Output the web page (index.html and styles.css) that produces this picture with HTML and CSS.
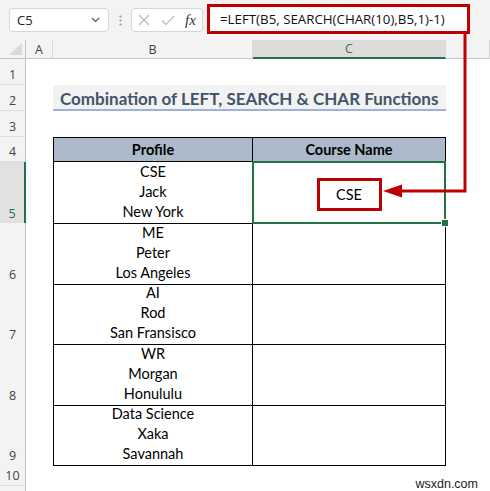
FILE: index.html
```html
<!DOCTYPE html>
<html lang="en">
<head>
    <meta charset="UTF-8">
    <title>LEFT SEARCH CHAR</title>
    <link rel="stylesheet" href="styles.css">
</head>
<body>
    <div class="app">
        <div class="fbar">
            <div class="namebox">
                <span>C5</span>
                <svg width="9" height="6" viewBox="0 0 9 6"><path d="M1 1 L4.5 4.5 L8 1" stroke="#555" stroke-width="1.2" fill="none"/></svg>
            </div>
            <div class="grip">
                <svg width="3" height="11" viewBox="0 0 3 11"><circle cx="1.5" cy="1.5" r="1.1" fill="#999"/><circle cx="1.5" cy="5.5" r="1.1" fill="#999"/><circle cx="1.5" cy="9.5" r="1.1" fill="#999"/></svg>
            </div>
            <div class="fxbox">
                <svg width="12" height="12" viewBox="0 0 12 12"><path d="M1 1 L11 11 M11 1 L1 11" stroke="#bbb" stroke-width="1.2"/></svg>
                <svg width="14" height="11" viewBox="0 0 14 11"><path d="M1 5.5 L5 9.5 L13 1" stroke="#bbb" stroke-width="1.2" fill="none"/></svg>
                <span class="fx">fx</span>
            </div>
            <div class="formula">=LEFT(B5, SEARCH(CHAR(10),B5,1)-1)</div>
        </div>

        <div class="sheet">
            <div class="row colhead">
                <div class="corner">
                    <svg width="13" height="12" viewBox="0 0 13 12"><polygon points="13,0 13,12 0,12" fill="#dadada"/></svg>
                </div>
                <div class="ch">A</div>
                <div class="ch">B</div>
                <div class="ch on">C</div>
                <div class="ch"></div>
            </div>

            <div class="row h26">
                <div class="rh">1</div><div></div><div></div><div></div><div></div>
            </div>
            <div class="row h26">
                <div class="rh">2</div><div></div>
                <div class="title">Combination of LEFT, SEARCH &amp; CHAR Functions</div>
                <div></div>
            </div>
            <div class="row h26">
                <div class="rh">3</div><div></div><div></div><div></div><div></div>
            </div>
            <div class="row h25">
                <div class="rh">4</div><div></div>
                <div class="tb head first">Profile</div>
                <div class="tb head">Course Name</div>
                <div></div>
            </div>
            <div class="row h61">
                <div class="rh on">5</div><div></div>
                <div class="tb first lines"><span>CSE</span><span>Jack</span><span>New York</span></div>
                <div class="tb sel"><span class="mark">CSE</span></div>
                <div></div>
            </div>
            <div class="row h60">
                <div class="rh">6</div><div></div>
                <div class="tb first lines"><span>ME</span><span>Peter</span><span>Los Angeles</span></div>
                <div class="tb"></div>
                <div></div>
            </div>
            <div class="row h61">
                <div class="rh">7</div><div></div>
                <div class="tb first lines"><span>AI</span><span>Rod</span><span>San Fransisco</span></div>
                <div class="tb"></div>
                <div></div>
            </div>
            <div class="row h60">
                <div class="rh">8</div><div></div>
                <div class="tb first lines"><span>WR</span><span>Morgan</span><span>Honululu</span></div>
                <div class="tb"></div>
                <div></div>
            </div>
            <div class="row h60">
                <div class="rh">9</div><div></div>
                <div class="tb first lines"><span>Data Science</span><span>Xaka</span><span>Savannah</span></div>
                <div class="tb"></div>
                <div></div>
            </div>
            <div class="row h22">
                <div class="rh">10</div><div></div><div></div><div></div><div></div>
            </div>
            <div class="row h22">
                <div class="rh"></div><div></div><div></div><div></div><div></div>
            </div>
        </div>

        <!-- annotation arrow from formula bar to the result -->
        <svg class="arrow" width="490" height="491" viewBox="0 0 490 491">
            <path d="M465 34 V191 H400" stroke="#c00000" stroke-width="3" fill="none"/>
            <polygon points="383,191 402,184.5 402,197.5" fill="#c00000"/>
        </svg>

        <div class="watermark">wsxdn.com</div>
    </div>
</body>
</html>
```

FILE: styles.css
```css
* {
    margin: 0;
    padding: 0;
    box-sizing: border-box;
}

body {
    background: #fff;
    font-family: Lato, "Open Sans", sans-serif;
    color: #000;
}

.app {
    position: relative;
    width: 490px;
    height: 491px;
    overflow: hidden;
}

/* formula bar */
.fbar {
    display: flex;
    height: 40px;
    padding-left: 9px;
    background: #f3f3f3;
}

.namebox {
    display: flex;
    align-items: center;
    justify-content: space-between;
    width: 100px;
    height: 24px;
    margin-top: 8px;
    padding: 0 8px 0 7px;
    background: #fff;
    border: 1px solid #d6d6d6;
    border-radius: 4px;
    font: 13px "Open Sans", sans-serif;
    color: #222;
}

.grip {
    display: flex;
    align-items: center;
    justify-content: center;
    width: 22px;
    height: 40px;
}

.fxbox {
    display: flex;
    align-items: center;
    gap: 11px;
    width: 72px;
    height: 24px;
    margin-top: 8px;
    padding-left: 6px;
    background: #fff;
    border: 1px solid #d6d6d6;
    border-radius: 4px;
}

.fx {
    font: italic 15px "Liberation Serif", serif;
    color: #333;
    margin-left: -1px;
}

.formula {
    width: 263px;
    height: 30px;
    margin-top: 4px;
    margin-left: 4px;
    padding-left: 10px;
    background: #fff;
    border: 3px solid #c00000;
    font: 13.3px/24px "Open Sans", sans-serif;
    color: #111;
    white-space: nowrap;
}

/* sheet grid */
.row {
    display: grid;
    grid-template-columns: 26px 27px 200px 193px 1fr;
}

.colhead { height: 19px; }
.h22 { height: 22px; }
.h25 { height: 25px; }
.h26 { height: 26px; }
.h60 { height: 60px; }
.h61 { height: 61px; }

.corner {
    display: flex;
    align-items: flex-end;
    justify-content: flex-end;
    padding: 0 3px 3px 0;
    background: #f3f3f3;
    border-right: 1px solid #c5c5c5;
    border-bottom: 1px solid #c5c5c5;
}

.ch {
    display: flex;
    align-items: center;
    justify-content: center;
    background: #f3f3f3;
    border-right: 1px solid #d9d9d9;
    border-bottom: 1px solid #c5c5c5;
    font: 12.5px "Open Sans", sans-serif;
    color: #444;
}

.ch.on {
    background: #dcdcdc;
    border-bottom: 2px solid #217346;
    color: #3f6a52;
}

.rh {
    display: flex;
    align-items: flex-end;
    justify-content: center;
    padding-bottom: 1px;
    background: #f3f3f3;
    border-right: 1px solid #c5c5c5;
    border-bottom: 1px solid #dedede;
    font: 12.5px/16px "Open Sans", sans-serif;
    color: #444;
}

.rh.on {
    background: #e1e1e1;
    border-right: 2px solid #217346;
    color: #217346;
}

.title {
    grid-column: span 2;
    display: flex;
    align-items: center;
    padding: 3px 0 0 7px;
    background: #f2f2f2;
    border-bottom: 2px solid #9fb1d6;
    font-size: 17px;
    font-weight: 700;
    color: #44546a;
    white-space: nowrap;
}

/* the data table */
.tb {
    display: flex;
    align-items: center;
    justify-content: center;
    border-right: 1px solid #000;
    border-bottom: 1px solid #000;
    font-size: 14.5px;
}

.tb.first { border-left: 1px solid #000; }

.tb.head {
    border-top: 1px solid #000;
    background: #acb9ca;
    font-weight: 700;
}

.tb.lines {
    flex-direction: column;
    justify-content: flex-end;
    padding-bottom: 1px;
    line-height: 20px;
}

.tb.sel {
    position: relative;
    padding-top: 4px;
}

.tb.sel::after {
    content: '';
    position: absolute;
    top: -1px;
    left: -1px;
    right: -1px;
    bottom: -1px;
    border: 2px solid #217346;
}

.tb.sel::before {
    content: '';
    position: absolute;
    right: -4px;
    bottom: -4px;
    width: 6px;
    height: 6px;
    background: #217346;
    border: 1px solid #fff;
    z-index: 1;
}

.mark {
    width: 65px;
    height: 33px;
    border: 3px solid #c00000;
    line-height: 27px;
    text-align: center;
}

.arrow {
    position: absolute;
    top: 0;
    left: 0;
    pointer-events: none;
}

.watermark {
    position: absolute;
    right: 12px;
    bottom: 0;
    font: 12.5px "Liberation Sans", Arial, sans-serif;
    color: #222;
}
```
